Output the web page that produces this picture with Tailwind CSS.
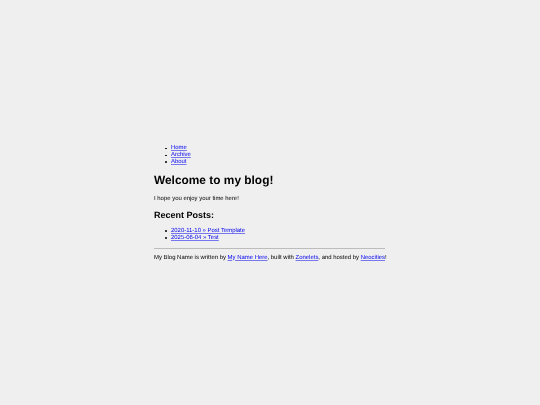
<!DOCTYPE html>
<html lang="en">
<head>
    <meta charset="UTF-8">
    <title>My Blog</title>
    <script src="https://cdn.jsdelivr.net/npm/@tailwindcss/browser@4"></script>
</head>
<body class="h-[405px] bg-[#efefef] font-['Liberation_Sans',Arial,sans-serif] text-[5.95px] leading-[6.9px] text-black overflow-hidden [text-rendering:geometricPrecision]">
    <div class="w-[231px] ml-[154px] pt-[145px] blur-[0.25px]">
        <ul class="pl-[17px]">
            <li class="relative before:absolute before:left-[-6.2px] before:top-[2.6px] before:size-[1.8px] before:rounded-full before:bg-black before:content-['']"><a href="#" class="text-[#0000ee] underline decoration-[#0000ee]/50">Home</a></li>
            <li class="relative before:absolute before:left-[-6.2px] before:top-[2.6px] before:size-[1.8px] before:rounded-full before:bg-black before:content-['']"><a href="#" class="text-[#0000ee] underline decoration-[#0000ee]/50">Archive</a></li>
            <li class="relative before:absolute before:left-[-6.2px] before:top-[2.6px] before:size-[1.8px] before:rounded-full before:bg-black before:content-['']"><a href="#" class="text-[#0000ee] underline decoration-[#0000ee]/50">About</a></li>
        </ul>
        <h1 class="mt-[8px] text-[11.9px] leading-[13.8px] font-bold">Welcome to my blog!</h1>
        <p class="mt-[8px]">I hope you enjoy your time here!</p>
        <h2 class="mt-[7.5px] text-[9px] leading-[10.4px] font-bold">Recent Posts:</h2>
        <ul class="mt-[7.5px] pl-[17px]">
            <li class="relative before:absolute before:left-[-6.2px] before:top-[2.6px] before:size-[1.8px] before:rounded-full before:bg-black before:content-['']"><a href="#" class="text-[#0000ee] underline decoration-[#0000ee]/50">2020-11-10 » Post Template</a></li>
            <li class="relative before:absolute before:left-[-6.2px] before:top-[2.6px] before:size-[1.8px] before:rounded-full before:bg-black before:content-['']"><a href="#" class="text-[#0000ee] underline decoration-[#0000ee]/50">2025-06-04 » Test</a></li>
        </ul>
        <hr class="mt-[6px] border-t border-[#bcbcbc]">
        <p class="mt-[6px] whitespace-nowrap">My Blog Name is written by <a href="#" class="text-[#0000ee] underline decoration-[#0000ee]/50">My Name Here</a>, built with <a href="#" class="text-[#0000ee] underline decoration-[#0000ee]/50">Zonelets</a>, and hosted by <a href="#" class="text-[#0000ee] underline decoration-[#0000ee]/50">Neocities</a>!</p>
    </div>
</body>
</html>
